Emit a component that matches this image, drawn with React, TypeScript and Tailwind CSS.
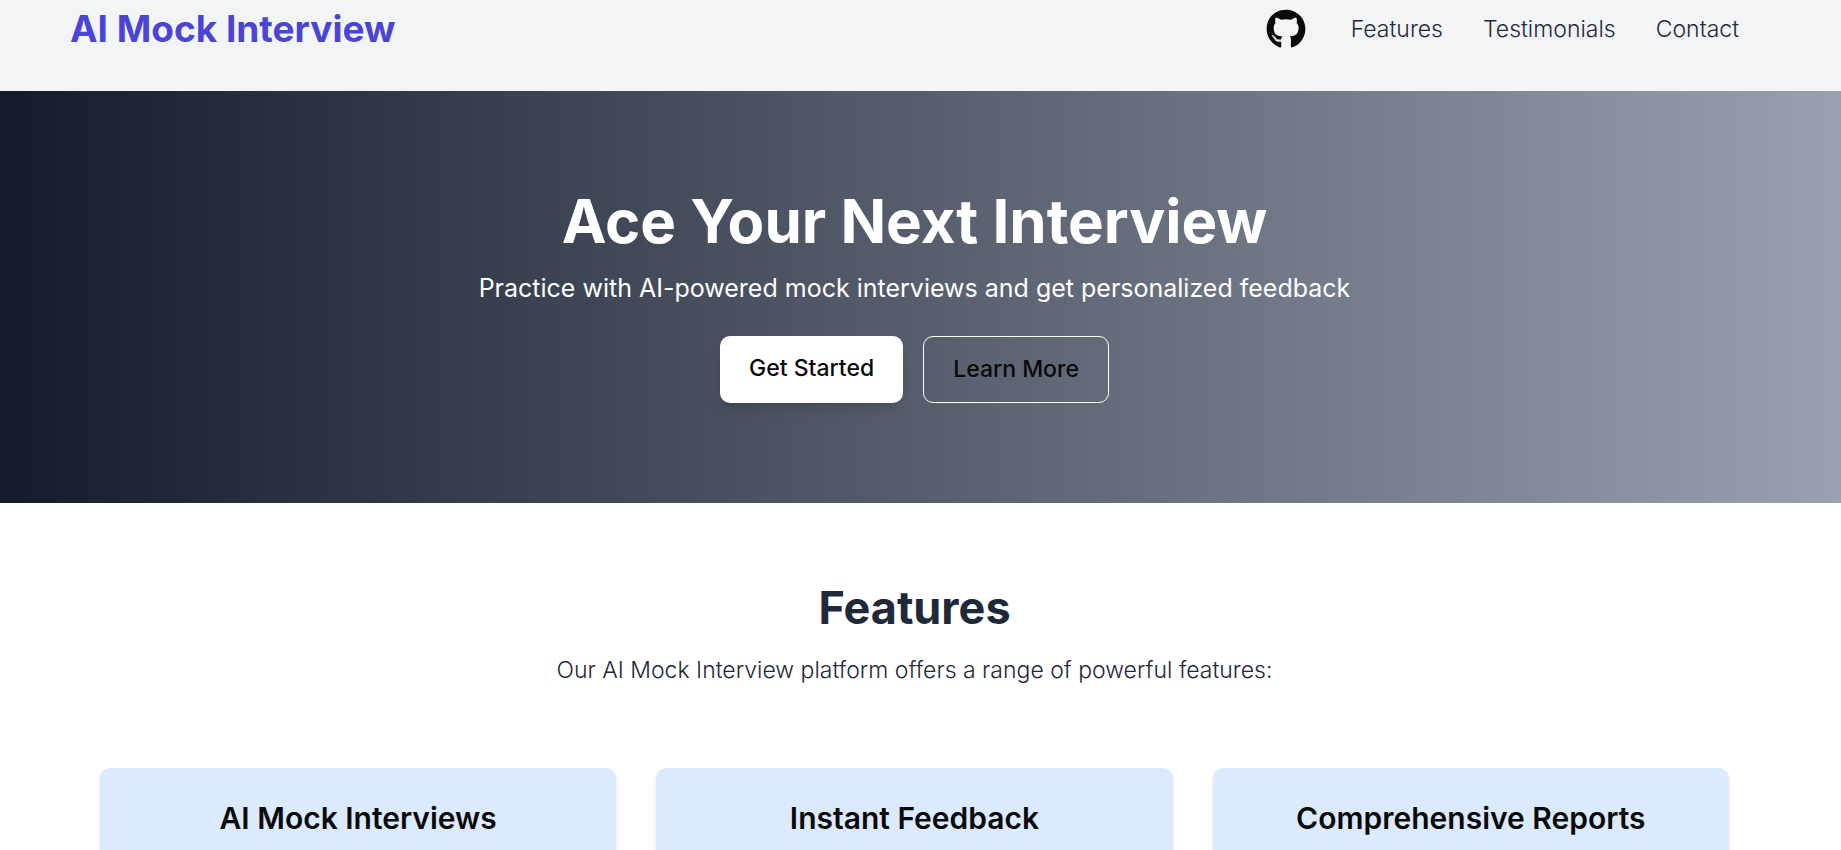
import React from "react";
import { FaGithub } from "react-icons/fa";

const navLinks = [
  { label: "Features", href: "#features" },
  { label: "Testimonials", href: "#testimonials" },
  { label: "Contact", href: "#contact" },
];

const features = ["AI Mock Interviews", "Instant Feedback", "Comprehensive Reports"];

function Header() {
  return (
    <header className="flex items-center justify-between bg-gray-100 pt-[6px] pr-[102px] pb-10 pl-[70px]">
      <a href="#" className="text-[37px] leading-[45px] font-bold text-[#4a45d6]">
        AI Mock Interview
      </a>
      <nav className="flex items-center gap-10 text-[23px] leading-9 font-light text-gray-800">
        <a href="https://github.com" aria-label="GitHub" className="mr-[5px]">
          <FaGithub className="size-10 text-[#0a0a0a]" aria-hidden="true" />
        </a>
        {navLinks.map((link) => (
          <a key={link.label} href={link.href}>
            {link.label}
          </a>
        ))}
      </nav>
    </header>
  );
}

function Hero() {
  return (
    <section className="bg-linear-to-r/srgb from-[#141b2b] to-gray-400 py-[100px] pr-3 text-center text-white">
      <h1 className="mb-5 text-[60px] leading-[60px] font-bold">Ace Your Next Interview</h1>
      <p className="mb-[30px] text-[25px] leading-[35px]">
        Practice with AI-powered mock interviews and get personalized feedback
      </p>
      <div className="flex justify-center gap-5 text-[23px] leading-[35px] font-medium text-[#0a0a0a]">
        <a href="#start" className="rounded-[10px] bg-white px-[29px] py-[15px] shadow-lg">
          Get Started
        </a>
        <a href="#learn" className="rounded-[10px] border border-white px-[29px] py-[15px]">
          Learn More
        </a>
      </div>
    </section>
  );
}

function Features() {
  return (
    <section id="features" className="bg-white pt-20 pr-[112px] pl-[100px]">
      <div className="mb-20 text-center text-gray-800">
        <h2 className="mb-5 text-[45px] leading-[50px] font-bold">Features</h2>
        <p className="text-[23px] leading-[35px] font-light">
          Our AI Mock Interview platform offers a range of powerful features:
        </p>
      </div>
      <div className="grid grid-cols-3 gap-10">
        {features.map((title) => (
          <article key={title} className="rounded-[10px] bg-blue-100 p-[30px] text-center shadow-md">
            <h3 className="text-[30px] leading-[40px] font-semibold text-[#0a0a0a]">{title}</h3>
          </article>
        ))}
      </div>
    </section>
  );
}

export default function App() {
  return (
    <main className="font-['Inter',sans-serif]">
      <Header />
      <Hero />
      <Features />
    </main>
  );
}
